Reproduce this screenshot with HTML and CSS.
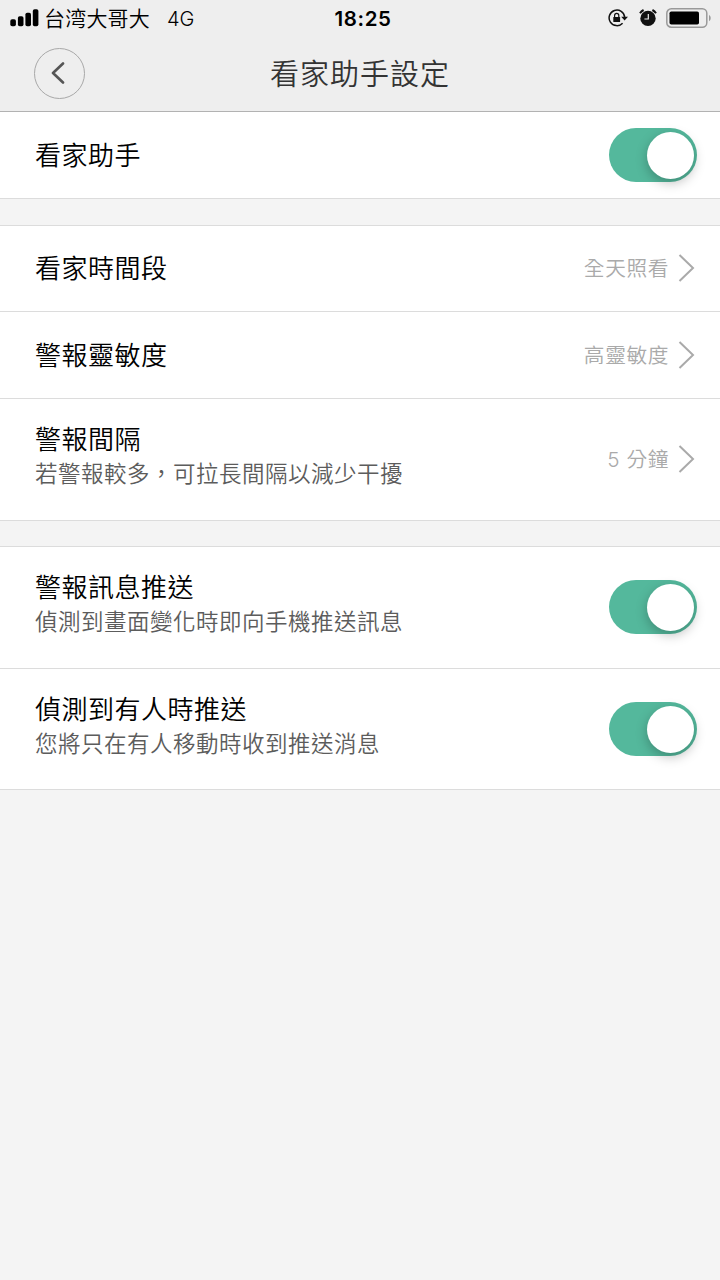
FILE: index.html
```html
<!DOCTYPE html>
<html lang="zh-Hant">
<head>
    <meta charset="UTF-8">
    <meta name="viewport" content="width=device-width, initial-scale=1.0">
    <title>看家助手設定</title>
    <link rel="stylesheet" href="styles.css">
</head>
<body>
    <header class="header">
        <div class="status-bar">
            <div class="status-left">
                <svg class="signal" width="29" height="18" viewBox="0 0 29 18">
                    <rect x="0.3" y="10.2" width="5.6" height="7" rx="1.8"/>
                    <rect x="7.9" y="7.2" width="5.6" height="10" rx="1.8"/>
                    <rect x="15.4" y="3.8" width="5.6" height="13.4" rx="1.8"/>
                    <rect x="22.8" y="0.2" width="5.6" height="17" rx="1.8"/>
                </svg>
                <span class="carrier">台湾大哥大</span>
                <span class="network">4G</span>
            </div>
            <div class="clock">18:25</div>
            <div class="status-right">
                <!-- Rotation lock -->
                <svg width="20" height="18" viewBox="0 0 20 18">
                    <path d="M14.6 14.2A7.8 7.8 0 1 1 16.7 8.2" fill="none" stroke="#111" stroke-width="1.5"/>
                    <path d="M13.2 7.8h6.8l-3.4 3.8z" fill="#111"/>
                    <rect x="5.3" y="7.9" width="6.8" height="5.2" rx="0.6" fill="#111"/>
                    <path d="M6.6 8.2V6.4a2.1 2.1 0 0 1 4.2 0v1.8" fill="none" stroke="#111" stroke-width="1.2"/>
                </svg>
                <!-- Alarm -->
                <svg class="alarm" width="18" height="18" viewBox="0 0 18 18">
                    <circle cx="9" cy="9.4" r="7.7" fill="#111"/>
                    <path d="M1 4.3A10 10 0 0 1 4.6 1M13.4 1A10 10 0 0 1 17 4.3" fill="none" stroke="#111" stroke-width="2"/>
                    <path d="M9.3 5v5H5.4" fill="none" stroke="#eee" stroke-width="1.2"/>
                </svg>
                <!-- Battery -->
                <svg class="battery" width="46" height="20" viewBox="0 0 46 20">
                    <rect x="0.8" y="0.8" width="40" height="18.4" rx="4.5" fill="none" stroke="#999" stroke-width="1.5"/>
                    <rect x="3.5" y="3.5" width="29.5" height="13" rx="1.8"/>
                    <path d="M43 6.7a4 4 0 0 1 0 6.6z" fill="#999"/>
                </svg>
            </div>
        </div>
        <div class="nav-bar">
            <button class="back" aria-label="返回">
                <svg width="14" height="22" viewBox="0 0 14 22">
                    <path d="M12 1.5L2 11l10 9.5" fill="none" stroke="#555" stroke-width="2.6" stroke-linecap="round" stroke-linejoin="round"/>
                </svg>
            </button>
            <h1 class="title">看家助手設定</h1>
        </div>
    </header>

    <main>
        <section class="group first">
            <div class="row">
                <div class="label">看家助手</div>
                <div class="switch"><div class="knob"></div></div>
            </div>
        </section>

        <section class="group">
            <div class="row">
                <div class="label">看家時間段</div>
                <div class="value">全天照看</div>
                <svg class="arrow" width="17" height="28" viewBox="0 0 17 28"><path d="M1.5 1L15 14 1.5 27"/></svg>
            </div>
            <div class="row">
                <div class="label">警報靈敏度</div>
                <div class="value">高靈敏度</div>
                <svg class="arrow" width="17" height="28" viewBox="0 0 17 28"><path d="M1.5 1L15 14 1.5 27"/></svg>
            </div>
            <div class="row tall">
                <div class="text">
                    <div class="label">警報間隔</div>
                    <div class="desc">若警報較多，可拉長間隔以減少干擾</div>
                </div>
                <div class="value">5 分鐘</div>
                <svg class="arrow" width="17" height="28" viewBox="0 0 17 28"><path d="M1.5 1L15 14 1.5 27"/></svg>
            </div>
        </section>

        <section class="group push">
            <div class="row tall">
                <div class="text">
                    <div class="label">警報訊息推送</div>
                    <div class="desc">偵測到畫面變化時即向手機推送訊息</div>
                </div>
                <div class="switch"><div class="knob"></div></div>
            </div>
            <div class="row tall">
                <div class="text">
                    <div class="label">偵測到有人時推送</div>
                    <div class="desc">您將只在有人移動時收到推送消息</div>
                </div>
                <div class="switch"><div class="knob"></div></div>
            </div>
        </section>
    </main>
</body>
</html>
```
FILE: styles.css
```css
* {
    box-sizing: border-box;
}
body {
    margin: 0;
    min-height: 1280px;
    background: #f4f4f4;
    color: #000;
    font-family: Inter, "Noto Sans CJK TC", sans-serif;
    font-weight: 350;
}
.header {
    height: 112px;
    background: #eee;
    border-bottom: 1px solid #b2b2b2;
}
.status-bar {
    display: grid;
    grid-template-columns: 1fr auto 1fr;
    align-items: center;
    height: 35px;
    padding: 0 8px 0 10px;
}
.status-left,
.status-right {
    display: flex;
    align-items: center;
}
.status-right {
    justify-content: flex-end;
}
.carrier {
    margin-left: 5px;
    padding-bottom: 3px;
    font-family: "Noto Sans CJK SC", sans-serif;
    font-size: 21px;
    letter-spacing: 0.2px;
    line-height: 32px;
}
.network {
    margin-left: 17px;
    padding-top: 2px;
    font-size: 20px;
    line-height: 34px;
}
.clock {
    padding: 1px 0 0 4px;
    font-size: 20.5px;
    font-weight: 600;
    letter-spacing: 0.6px;
}
.alarm {
    margin-left: 11px;
}
.battery {
    margin-left: 9px;
}
.nav-bar {
    display: grid;
    grid-template-columns: 51px 1fr 51px;
    align-items: center;
    height: 76px;
    padding: 0 34px;
}
.back {
    display: flex;
    align-items: center;
    justify-content: center;
    width: 51px;
    height: 51px;
    padding: 0 4px 0 0;
    border: 1px solid #a8a8a8;
    border-radius: 50%;
    background: none;
}
.title {
    margin: 0;
    padding-bottom: 3px;
    color: #333;
    font-size: 29px;
    font-weight: 350;
    letter-spacing: 1px;
    text-align: center;
}
.group {
    margin-top: 26px;
    border-top: 1px solid #dcdcdc;
    background: #fff;
}
.group.first {
    margin-top: 0;
    border-top: 0;
}
.group.push {
    margin-top: 25.7px;
}
.row {
    display: flex;
    align-items: center;
    height: 86.5px;
    padding: 0 23px 0 35px;
    border-bottom: 1px solid #dcdcdc;
}
.row.tall {
    height: 122px;
}
.push .row.tall {
    height: 121.6px;
}
.label {
    flex: 1;
    padding-top: 2px;
    font-size: 26px;
    letter-spacing: 0.5px;
    line-height: 36px;
}
.text {
    flex: 1;
    padding-bottom: 6px;
}
.text .label {
    padding-top: 0;
}
.desc {
    margin-top: -1px;
    color: #5c5c5c;
    font-size: 22.5px;
    letter-spacing: 0.5px;
    line-height: 33px;
}
.value {
    padding-bottom: 2px;
    color: #aaa;
    font-size: 20.7px;
    letter-spacing: 0.6px;
}
.arrow {
    margin: 0 2px 0 9px;
    fill: none;
    stroke: #aaa;
    stroke-width: 2;
}
.switch {
    display: flex;
    justify-content: flex-end;
    width: 88px;
    height: 54px;
    padding: 4px 3px 0 0;
    border-radius: 27px;
    background: #54b89c;
}
.knob {
    width: 47px;
    height: 47px;
    border-radius: 50%;
    background: #fff;
    box-shadow: 0 4px 12px rgba(0, 0, 0, 0.25);
}
```
